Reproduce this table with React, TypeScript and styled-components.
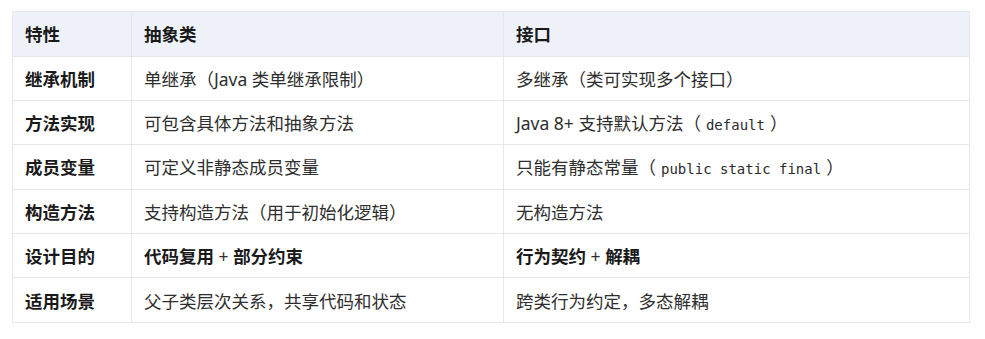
import styled, { createGlobalStyle } from 'styled-components'

const GlobalStyle = createGlobalStyle`
  html, body {
    margin: 0;
    padding: 0;
    background: #ffffff;
  }
`

const Page = styled.div`
  padding: 11px 16px 0 12px;
  font-family: 'Noto Sans', 'Noto Sans CJK SC', sans-serif;
  font-size: 17.5px;
  color: #2b2b2b;
`

const Table = styled.table`
  width: 958px;
  border-collapse: collapse;
  table-layout: fixed;
`

const HeadCell = styled.th<{ $w?: number }>`
  width: ${(p) => (p.$w ? `${p.$w}px` : 'auto')};
  height: 44.5px;
  padding: 0 12px;
  text-align: left;
  font-weight: 700;
  color: #1a1a1a;
  background: #eef2f8;
  border: 1px solid #e3e7ee;
  box-sizing: border-box;
`

const Cell = styled.td<{ $head?: boolean }>`
  height: 44.4px;
  padding: 0 12px;
  border: 1px solid #e3e7ee;
  box-sizing: border-box;
  font-weight: ${(p) => (p.$head ? 700 : 400)};
  color: ${(p) => (p.$head ? '#1a1a1a' : '#2e2e2e')};
  white-space: nowrap;
`

const Strong = styled.b`
  font-weight: 700;
  color: #1a1a1a;
`

const Code = styled.code`
  font-family: 'DejaVu Sans Mono', 'Liberation Mono', monospace;
  font-size: 14px;
  padding: 0 5px;
  color: #2b2b2b;
`

type Row = { name: string; abs: React.ReactNode; iface: React.ReactNode }

const rows: Row[] = [
  { name: '继承机制', abs: '单继承（Java 类单继承限制）', iface: '多继承（类可实现多个接口）' },
  {
    name: '方法实现',
    abs: '可包含具体方法和抽象方法',
    iface: (
      <>
        Java 8+ 支持默认方法（<Code>default</Code>）
      </>
    ),
  },
  {
    name: '成员变量',
    abs: '可定义非静态成员变量',
    iface: (
      <>
        只能有静态常量（<Code>public static final</Code>）
      </>
    ),
  },
  { name: '构造方法', abs: '支持构造方法（用于初始化逻辑）', iface: '无构造方法' },
  {
    name: '设计目的',
    abs: (
      <>
        <Strong>代码复用</Strong> + <Strong>部分约束</Strong>
      </>
    ),
    iface: (
      <>
        <Strong>行为契约</Strong> + <Strong>解耦</Strong>
      </>
    ),
  },
  { name: '适用场景', abs: '父子类层次关系，共享代码和状态', iface: '跨类行为约定，多态解耦' },
]

export default function App() {
  return (
    <Page>
      <GlobalStyle />
      <Table>
        <thead>
          <tr>
            <HeadCell $w={119}>特性</HeadCell>
            <HeadCell $w={372}>抽象类</HeadCell>
            <HeadCell>接口</HeadCell>
          </tr>
        </thead>
        <tbody>
          {rows.map((r) => (
            <tr key={r.name}>
              <Cell $head>{r.name}</Cell>
              <Cell>{r.abs}</Cell>
              <Cell>{r.iface}</Cell>
            </tr>
          ))}
        </tbody>
      </Table>
    </Page>
  )
}
